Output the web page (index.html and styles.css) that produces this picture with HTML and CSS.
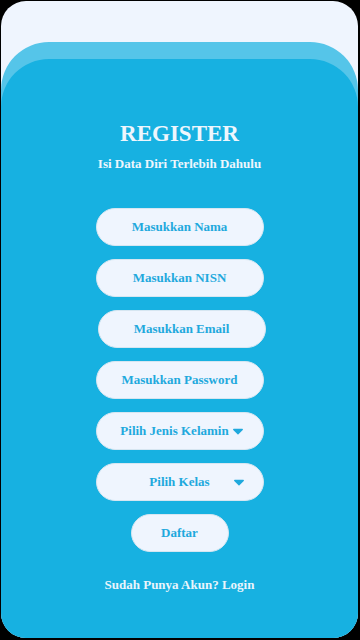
FILE: index.html
```html
<!DOCTYPE html>
<html lang="id">
<head>
<meta charset="utf-8">
<meta name="viewport" content="width=device-width, initial-scale=1">
<title>Register</title>
<link rel="stylesheet" href="styles.css">
</head>
<body>
<div class="screen">
  <div class="layer-back">
    <div class="layer-front">
      <h1 class="title">REGISTER</h1>
      <p class="subtitle">Isi Data Diri Terlebih Dahulu</p>
      <div class="form">
        <div class="field">Masukkan Nama</div>
        <div class="field">Masukkan NISN</div>
        <div class="field field-shift">Masukkan Email</div>
        <div class="field">Masukkan Password</div>
        <div class="field field-select">
          <span>Pilih Jenis Kelamin</span>
          <svg class="caret" viewBox="10 188 300 172" width="10" height="7"><path d="M31.3 192h257.3c17.8 0 26.7 21.5 14.1 34.1L174.1 354.8c-7.8 7.8-20.5 7.8-28.3 0L17.2 226.1C4.6 213.5 13.5 192 31.3 192z"/></svg>
        </div>
        <div class="field field-grid">
          <span class="spacer"></span>
          <span>Pilih Kelas</span>
          <svg class="caret caret-far" viewBox="10 188 300 172" width="10" height="7"><path d="M31.3 192h257.3c17.8 0 26.7 21.5 14.1 34.1L174.1 354.8c-7.8 7.8-20.5 7.8-28.3 0L17.2 226.1C4.6 213.5 13.5 192 31.3 192z"/></svg>
        </div>
        <div class="field field-btn">Daftar</div>
      </div>
      <p class="login">Sudah Punya Akun? Login</p>
    </div>
  </div>
</div>
</body>
</html>
```
FILE: styles.css
```css
html, body {
  margin: 0;
  padding: 0;
  background: #000;
}
body {
  width: 360px;
  height: 640px;
  overflow: hidden;
  font-family: "Liberation Serif", "DejaVu Serif", serif;
}
.screen {
  box-sizing: border-box;
  width: 357px;
  height: 637px;
  margin: 1px 2px 2px 1px;
  border-radius: 25px;
  background: #eff5fe;
  overflow: hidden;
  padding-top: 41px;
  display: flex;
  flex-direction: column;
}
.layer-back {
  flex: 1;
  background: #55c5e9;
  border-radius: 48px 48px 0 0;
  padding-top: 17px;
  display: flex;
  flex-direction: column;
}
.layer-front {
  flex: 1;
  background: #17b1e1;
  border-radius: 48px 48px 0 0;
  display: flex;
  flex-direction: column;
  align-items: center;
  padding-top: 60px;
}
.title {
  margin: 0;
  font-size: 23px;
  line-height: 30px;
  font-weight: 700;
  color: #eef6fd;
}
.subtitle {
  margin: 7px 0 0;
  font-size: 13px;
  line-height: 16px;
  font-weight: 700;
  color: #eef6fd;
}
.form {
  margin-top: 36px;
  display: flex;
  flex-direction: column;
  align-items: center;
  gap: 13px;
}
.field {
  box-sizing: border-box;
  width: 168px;
  height: 38px;
  border-radius: 19px;
  background: #eff5fe;
  border: 1px solid #d6e6f1;
  color: #1fa9dd;
  font-size: 13px;
  font-weight: 700;
  display: flex;
  align-items: center;
  justify-content: center;
}
.field-shift {
  margin-left: 4px;
}
.field-select {
  gap: 4px;
  padding-left: 4px;
}
.field-grid {
  display: grid;
  grid-template-columns: 1fr auto 1fr;
  align-items: center;
}
.caret {
  fill: #1fa9dd;
  display: block;
}
.caret-far {
  margin-left: 24px;
}
.field-btn {
  width: 98px;
}
.login {
  margin: 25px 0 0;
  font-size: 13px;
  line-height: 16px;
  font-weight: 700;
  color: #eaf5fc;
}
```
